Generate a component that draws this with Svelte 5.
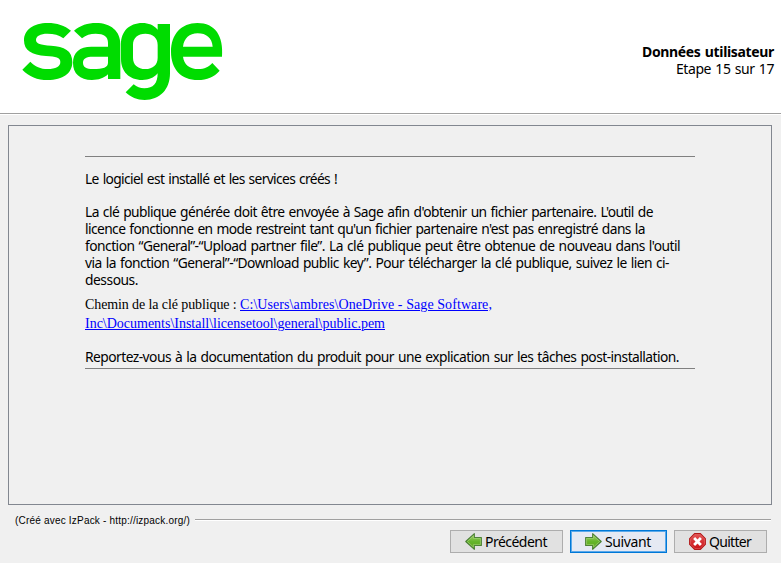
<script>
  const paragraphs = [
    [['Le logiciel est installé et les services créés !', 252]],
    [
      ["La clé publique générée doit être envoyée à Sage afin d'obtenir un fichier partenaire. L'outil de", 568],
      ["licence fonctionne en mode restreint tant qu'un fichier partenaire n'est pas enregistré dans la", 560],
      ["fonction “General”-“Upload partner file”. La clé publique peut être obtenue de nouveau dans l'outil", 595],
      ['via la fonction “General”-“Download public key”. Pour télécharger la clé publique, suivez le lien ci-', 584],
      ['dessous.', 53]
    ]
  ];
  const closing = ['Reportez-vous à la documentation du produit pour une explication sur les tâches post-installation.', 594];

  // Spreads or tightens the letters so that a line takes the given width.
  function fit(node, width) {
    const natural = node.getBoundingClientRect().width;
    node.style.letterSpacing = `${(width - natural) / node.textContent.length}px`;
  }
</script>

<div class="window">
  <header>
    <svg class="logo" width="230" height="103" viewBox="0 0 690 309" role="img" aria-label="sage">
      <path d="M183 62C164 47 141 39 113 39C70 39 42 60 42 91C42 122 65 135 108 138C138 140 151 143 151 156C151 170 137 177 113 177C92 177 75 170 61 155L37 179C57 200 82 210 113 210C159 210 187 190 187 156C187 122 163 109 123 107C91 105 78 101 78 90C78 78 91 71 112 71C132 71 147 75 160 85Z" />
      <path fill-rule="evenodd" d="M192 62C211 46 233 39 258 39C302 39 331 63 331 102V207H294V193C281 205 266 210 246 210C209 210 189 190 189 159C189 127 209 110 244 110H294V98C294 80 282 71 257 71C241 71 228 75 216 85ZM294 140H249C229 140 219 145 219 158C219 171 229 177 249 177C280 177 294 172 294 158Z" />
      <path fill-rule="evenodd" d="M443 59V42H480V190C480 239 449 270 404 270C381 270 362 262 347 247L371 223C381 231 390 235 403 235C430 235 443 220 443 190C431 204 416 210 397 210C357 210 333 184 333 147V102C333 65 357 39 397 39C416 39 431 45 443 59ZM406 71C383 71 369 84 369 105V143C369 164 383 177 406 177C429 177 443 164 443 143V105C443 84 429 71 406 71Z" />
      <path fill-rule="evenodd" d="M562 39C514 39 483 73 483 125C483 177 513 210 564 210C591 210 612 201 629 182L607 159C595 171 584 177 565 177C539 177 522 164 519 140H636C641 78 616 39 562 39ZM519 110C522 85 538 70 563 70C589 70 606 84 608 110Z" />
    </svg>
    <div class="step">
      <strong><span use:fit={132}>Données utilisateur</span></strong>
      <div><span use:fit={98}>Etape 15 sur 17</span></div>
    </div>
  </header>

  <main>
    <article>
      {#each paragraphs as lines}
        <p>
          {#each lines as [text, width]}
            <span class="line"><span use:fit={width}>{text}</span></span>
          {/each}
        </p>
      {/each}
      <p class="path">
        <span class="line"><span use:fit={155}>Chemin de la clé publique :&nbsp;</span><a href="#key" use:fit={252}>C:\Users\ambres\OneDrive - Sage Software,</a></span>
        <span class="line"><a href="#key" use:fit={300}>Inc\Documents\Install\licensetool\general\public.pem</a></span>
      </p>
      <p class="closing"><span class="line"><span use:fit={closing[1]}>{closing[0]}</span></span></p>
    </article>
  </main>

  <footer>
    <div class="credit">
      <span use:fit={175}>(Créé avec IzPack - http://izpack.org/)</span>
      <i></i>
    </div>
    <nav>
      <button class="prev">
        <svg width="17" height="17" viewBox="0 0 16 16">
          <defs>
            <linearGradient id="green" x1="0" y1="0" x2="0" y2="1">
              <stop offset="0" stop-color="#a8d36c" />
              <stop offset="0.5" stop-color="#65b52c" />
              <stop offset="1" stop-color="#5ba51a" />
            </linearGradient>
          </defs>
          <path d="M.7 8L8.8 .6V4.2H15.4V11.8H8.8V15.4Z" fill="url(#green)" stroke="#4b7f35" stroke-linejoin="round" />
          <path d="M2.2 8L7.9 2.8V5.1H14.5V10.9H7.9V13.2Z" fill="none" stroke="#a6d27a" stroke-width=".6" />
        </svg>
        <span use:fit={62}>Précédent</span>
      </button>
      <button class="next">
        <svg width="17" height="17" viewBox="0 0 16 16">
          <path d="M15.3 8L7.2 .6V4.2H.6V11.8H7.2V15.4Z" fill="url(#green)" stroke="#4b7f35" stroke-linejoin="round" />
          <path d="M13.8 8L8.1 2.8V5.1H1.5V10.9H8.1V13.2Z" fill="none" stroke="#a6d27a" stroke-width=".6" />
        </svg>
        <span use:fit={46}>Suivant</span>
      </button>
      <button class="quit">
        <svg width="17" height="17" viewBox="0 0 16 16">
          <defs>
            <linearGradient id="red" x1="0" y1="0" x2="0" y2="1">
              <stop offset="0" stop-color="#e45757" />
              <stop offset="1" stop-color="#c90d12" />
            </linearGradient>
          </defs>
          <path d="M5.2 .6H10.8L15.4 5.2V10.8L10.8 15.4H5.2L.6 10.8V5.2Z" fill="url(#red)" stroke="#b21818" stroke-linejoin="round" />
          <path d="M5.5 1.5H10.5L14.5 5.5V10.5L10.5 14.5H5.5L1.5 10.5V5.5Z" fill="none" stroke="#e66f6f" stroke-width=".5" />
          <path d="M4.8 4.8L11.2 11.2M11.2 4.8L4.8 11.2" stroke="#fff" stroke-width="2.6" />
        </svg>
        <span use:fit={42}>Quitter</span>
      </button>
    </nav>
  </footer>
</div>

<style>
  .window {
    box-sizing: border-box;
    width: 781px;
    height: 563px;
    display: flex;
    flex-direction: column;
    overflow: hidden;
    background: #f0f0f0;
    color: #000;
    font: 14px/17px "Noto Sans", "Open Sans", sans-serif;
    white-space: nowrap;
  }
  header {
    box-sizing: border-box;
    flex: none;
    height: 115px;
    padding: 10px 7px 0 10px;
    display: flex;
    justify-content: space-between;
    background: #fff;
    border-bottom: 1px solid #fff;
    box-shadow: inset 0 -1px #a0a0a0;
  }
  .logo {
    flex: none;
    fill: #00dc00;
  }
  .step {
    padding-top: 33px;
    text-align: right;
    word-spacing: 1px;
  }
  .step strong {
    display: block;
  }
  main {
    box-sizing: border-box;
    flex: none;
    height: 380px;
    margin: 10px 9px 0 8px;
    padding: 30px 76px 0;
    border: 1px solid #828790;
  }
  article {
    box-sizing: border-box;
    width: 610px;
    height: 213px;
    padding-top: 13px;
    border-top: 1px solid #808080;
    border-bottom: 1px solid #808080;
  }
  p {
    margin: 0 0 16px;
    font-size: 13.8px;
    word-spacing: 1px;
  }
  .line {
    display: block;
  }
  .path {
    margin: -9px 0 15px;
    font: 14px/19px "Liberation Serif", serif;
    word-spacing: 0;
  }
  .closing {
    margin: 0;
  }
  a {
    color: #00f;
    text-decoration: underline;
  }
  .credit {
    display: flex;
    height: 16px;
    margin-top: 8px;
    padding: 0 10px 0 15px;
    gap: 5px;
    font: 10px/16px "Liberation Sans", sans-serif;
  }
  .credit i {
    flex: 1;
    height: 1px;
    margin-top: 6px;
    background: #a0a0a0;
    border-bottom: 1px solid #fff;
  }
  nav {
    display: flex;
    justify-content: flex-end;
    gap: 7px;
    margin-top: 1px;
    padding-right: 14px;
  }
  button {
    box-sizing: border-box;
    height: 23px;
    margin: 0;
    padding: 0 0 0 14px;
    display: flex;
    align-items: center;
    gap: 3px;
    border: 1px solid #adadad;
    background: #e1e1e1;
    color: #000;
    font: 14px/17px "Noto Sans", "Open Sans", sans-serif;
  }
  .prev {
    width: 113px;
  }
  .next {
    width: 97px;
    border-color: #0078d7;
    background: #e5e9f3;
    box-shadow: inset 0 0 0 1px #5ba9ea;
  }
  .quit {
    width: 93px;
  }
</style>
